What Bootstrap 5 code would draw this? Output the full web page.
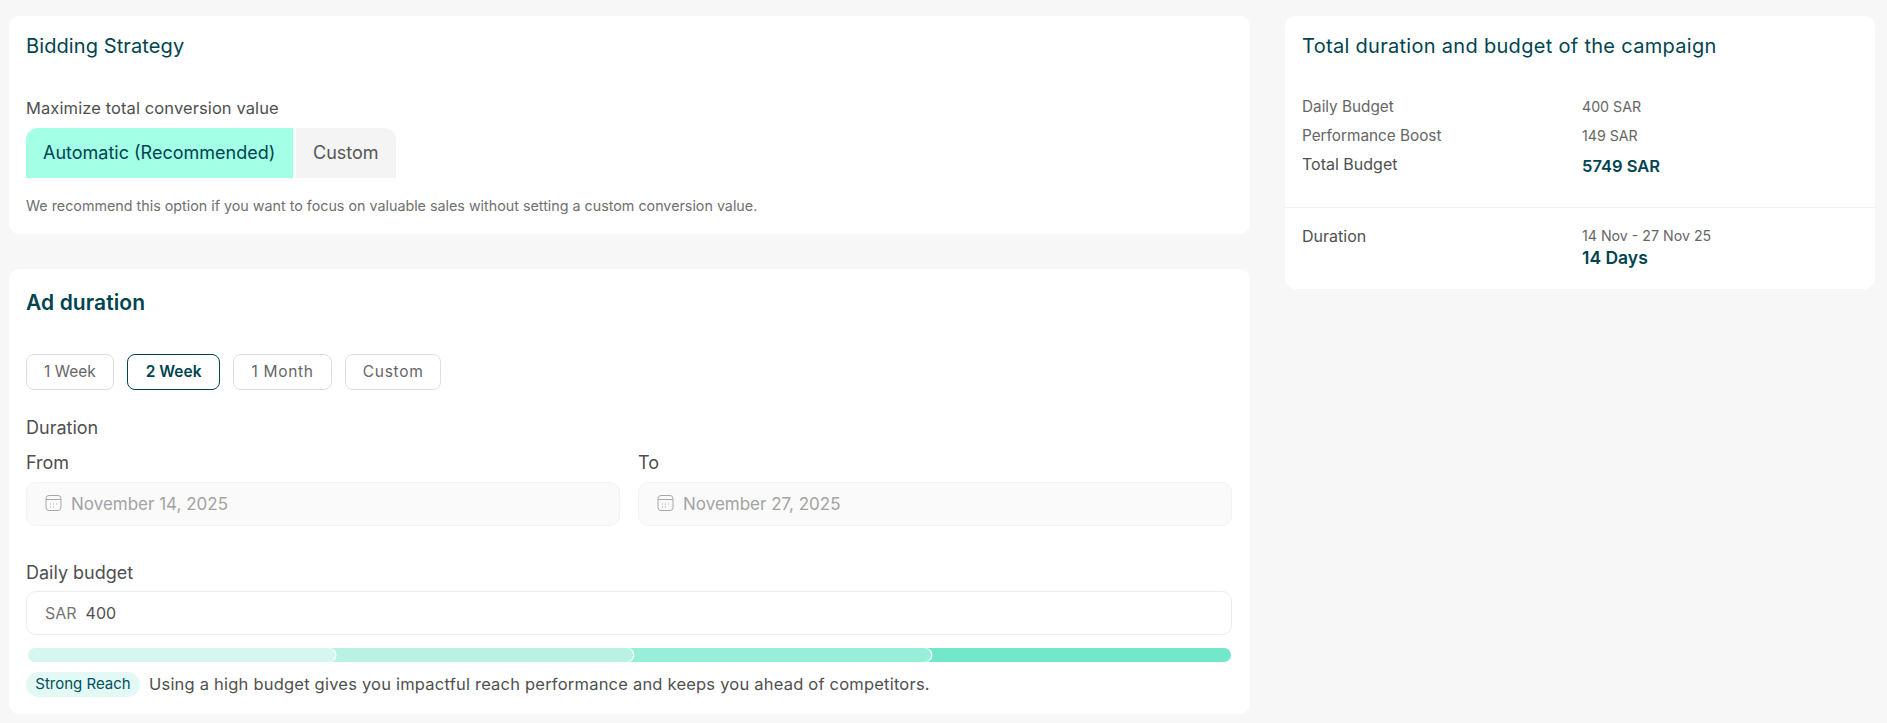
<!DOCTYPE html>
<html lang="en">
<head>
    <meta charset="UTF-8">
    <meta name="viewport" content="width=device-width, initial-scale=1.0">
    <title>Campaign budget</title>
    <link href="https://cdn.jsdelivr.net/npm/bootstrap@5.3.0/dist/css/bootstrap.min.css" rel="stylesheet">
    <script defer src="https://cdn.jsdelivr.net/npm/bootstrap@5.3.0/dist/js/bootstrap.bundle.min.js"></script>
    <style>
        body {
            background: #f7f7f7;
            font-family: Inter, "Noto Sans", sans-serif;
            color: #4f4f4f;
            overflow: hidden;
        }
        .page-wrap { padding: 16px 12px 0 9px; gap: 35px; }
        .main-col { width: 1241px; }
        .side-col { width: 590px; height: 273px; }
        .panel { background: #fff; border-radius: 10px; }
        .panel-bidding { height: 218px; padding: 17px 17px 0; margin-bottom: 35px; }
        .panel-duration { height: 445px; padding: 21px 18px 0 17px; }
        .panel-title { font-size: 20px; letter-spacing: .3px; line-height: 26px; color: #00444f; font-weight: 400; margin: 0; }
        .panel-bidding .panel-title { letter-spacing: .1px; }
        .panel-title-bold { font-size: 21px; letter-spacing: .1px; line-height: 26px; color: #00444f; font-weight: 600; margin: 0; }
        .field-label { font-size: 16.5px; letter-spacing: .1px; line-height: 22px; margin-top: 38px; }
        .bid-toggle { gap: 3px; margin-top: 9px; }
        .bid-btn { height: 50px; font-size: 18px; display: flex; align-items: center; padding-bottom: 2px; }
        .bid-on { width: 267px; padding-left: 17px; background: #a3ffe5; color: #00444f; border-radius: 12px 0 0 0; }
        .bid-off { width: 100px; padding-left: 17px; background: #f4f4f4; color: #555; border-radius: 0 12px 0 0; }
        .hint-text { font-size: 14.3px; line-height: 20px; color: #6f6f6f; margin-top: 18px; }
        .week-row { gap: 13px; margin-top: 38px; }
        .week-btn { height: 36px; padding: 0 17px; border: 1px solid #dedede; border-radius: 8px; background: #fff; font-size: 15.5px; color: #666; display: flex; align-items: center; justify-content: center; }
        .week-wide { letter-spacing: .7px; }
        .week-on { border-color: #00444f; color: #00444f; font-weight: 600; padding: 0 18px; }
        .group-label { font-size: 18px; line-height: 26px; }
        .duration-label { margin-top: 25px; }
        .date-row { gap: 18px; margin-top: 9px; }
        .date-col { width: 594px; }
        .date-label { margin-bottom: 6px; }
        .date-box { height: 44px; background: #fafafa; border: 1px solid #f3f3f3; border-radius: 10px; padding-left: 18px; gap: 9px; color: #a3a3a3; font-size: 17px; }
        .date-box svg { margin-bottom: 3px; }
        .date-box span { padding-top: 2px; }
        .budget-label { margin-top: 34px; margin-bottom: 5px; }
        .budget-box { height: 44px; border: 1px solid #ececec; border-radius: 10px; padding-left: 18px; gap: 9px; font-size: 16px; }
        .budget-cur { color: #757575; }
        .budget-val { color: #4f4f4f; }
        .reach-bar { height: 14px; margin: 13px 1px 0 2px; }
        .reach-seg { height: 14px; flex: 0 0 307px; margin-left: -9px; border-radius: 0 9px 9px 0; box-shadow: 1.5px 0 0 #fff; }
        .reach-seg:first-child { margin-left: 0; border-radius: 9px; }
        .reach-seg:last-child { flex-grow: 1; box-shadow: none; border-radius: 0 7px 7px 0; }
        .seg-1 { background: #d5f7ef; z-index: 4; }
        .seg-2 { background: #b8f2e3; z-index: 3; }
        .seg-3 { background: #97eed9; z-index: 2; }
        .seg-4 { background: #72e7ca; z-index: 1; }
        .reach-note { gap: 9px; margin-top: 10px; font-size: 16.5px; letter-spacing: .21px; }
        .reach-pill { height: 25px; width: 114px; border-radius: 13px; background: #e3f9f5; color: #00505e; font-size: 15px; letter-spacing: 0; display: flex; align-items: center; justify-content: center; }
        .side-top { padding: 17px 17px 0; height: 192px; border-bottom: 1px solid #f3f3f3; }
        .side-bottom { padding: 17px 17px 0; }
        .sum-list { margin-top: 33px; }
        .sum-row { height: 29px; font-size: 14.2px; line-height: 29px; color: #666; }
        .sum-name { width: 280px; font-size: 15.3px; }
        .sum-strong { font-size: 16px; color: #4f4f4f; }
        .sum-total { font-size: 16.5px; font-weight: 600; color: #00444f; line-height: 33px; }
        .sum-duration { font-size: 14.2px; color: #666; line-height: 22px; }
        .sum-days { font-size: 17.5px; font-weight: 600; color: #00444f; }
    </style>
</head>
<body>
    <div class="d-flex align-items-start page-wrap">
        <div class="main-col">
            <div class="panel panel-bidding">
                <h5 class="panel-title">Bidding Strategy</h5>
                <div class="field-label">Maximize total conversion value</div>
                <div class="d-flex bid-toggle">
                    <div class="bid-btn bid-on">Automatic (Recommended)</div>
                    <div class="bid-btn bid-off">Custom</div>
                </div>
                <div class="hint-text">We recommend this option if you want to focus on valuable sales without setting a custom conversion value.</div>
            </div>

            <div class="panel panel-duration">
                <h5 class="panel-title-bold">Ad duration</h5>
                <div class="d-flex week-row">
                    <div class="week-btn">1 Week</div>
                    <div class="week-btn week-on">2 Week</div>
                    <div class="week-btn week-wide">1 Month</div>
                    <div class="week-btn week-wide">Custom</div>
                </div>
                <div class="group-label duration-label">Duration</div>
                <div class="d-flex date-row">
                    <div class="date-col">
                        <div class="group-label date-label">From</div>
                        <div class="date-box d-flex align-items-center">
                            <svg width="17" height="18" viewBox="0 0 17 18" fill="none" stroke="#a8a8a8" stroke-width="1"><rect x="1" y="1.5" width="15" height="15" rx="3"/><path d="M1 5.5h15"/><path d="M5 10h1M8 10h1M11 10h1M5 13h1M8 13h1"/></svg>
                            <span>November 14, 2025</span>
                        </div>
                    </div>
                    <div class="date-col">
                        <div class="group-label date-label">To</div>
                        <div class="date-box d-flex align-items-center">
                            <svg width="17" height="18" viewBox="0 0 17 18" fill="none" stroke="#a8a8a8" stroke-width="1"><rect x="1" y="1.5" width="15" height="15" rx="3"/><path d="M1 5.5h15"/><path d="M5 10h1M8 10h1M11 10h1M5 13h1M8 13h1"/></svg>
                            <span>November 27, 2025</span>
                        </div>
                    </div>
                </div>
                <div class="group-label budget-label">Daily budget</div>
                <div class="budget-box d-flex align-items-center">
                    <span class="budget-cur">SAR</span>
                    <span class="budget-val">400</span>
                </div>
                <div class="d-flex reach-bar">
                    <div class="reach-seg seg-1"></div>
                    <div class="reach-seg seg-2"></div>
                    <div class="reach-seg seg-3"></div>
                    <div class="reach-seg seg-4"></div>
                </div>
                <div class="d-flex align-items-center reach-note">
                    <span class="reach-pill">Strong Reach</span>
                    <span>Using a high budget gives you impactful reach performance and keeps you ahead of competitors.</span>
                </div>
            </div>
        </div>

        <div class="panel side-col">
            <div class="side-top">
                <h5 class="panel-title">Total duration and budget of the campaign</h5>
                <div class="sum-list">
                    <div class="d-flex sum-row"><div class="sum-name">Daily Budget</div><div>400 SAR</div></div>
                    <div class="d-flex sum-row"><div class="sum-name">Performance Boost</div><div>149 SAR</div></div>
                    <div class="d-flex sum-row"><div class="sum-name sum-strong">Total Budget</div><div class="sum-total">5749 SAR</div></div>
                </div>
            </div>
            <div class="side-bottom">
                <div class="d-flex sum-duration">
                    <div class="sum-name sum-strong">Duration</div>
                    <div>14 Nov - 27 Nov 25<div class="sum-days">14 Days</div></div>
                </div>
            </div>
        </div>
    </div>
</body>
</html>
